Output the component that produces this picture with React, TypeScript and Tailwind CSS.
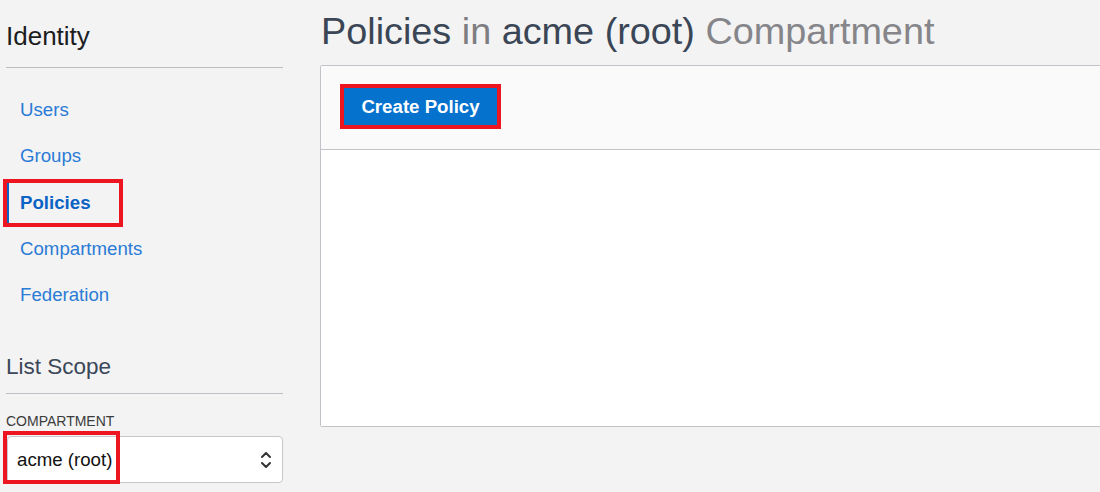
import React from 'react';

const navItems = ['Users', 'Groups', 'Policies', 'Compartments', 'Federation'];

function SelectArrows() {
  return (
    <svg width="12" height="22" viewBox="0 0 12 22" fill="none" aria-hidden="true">
      <polyline points="2,8 6,4 10,8" stroke="#333" strokeWidth="2" strokeLinecap="round" strokeLinejoin="round" />
      <polyline points="2,14 6,18 10,14" stroke="#333" strokeWidth="2" strokeLinecap="round" strokeLinejoin="round" />
    </svg>
  );
}

function Sidebar() {
  return (
    <aside className="w-[277px] ml-[6px] shrink-0">
      <div className="pt-[20px] pb-[15px] border-b border-[#bdbdc4]">
        <h2 className="text-[26px] leading-[32px] text-[#1d1d1f]">Identity</h2>
      </div>

      <nav className="mt-[19px] flex flex-col">
        {navItems.map((item) => {
          const active = item === 'Policies';
          return (
            <div key={item} className="relative h-[46.25px] flex items-center pl-[14px]">
              {active && (
                <>
                  <span className="absolute left-0 top-[3px] w-[3px] h-[40px] bg-[#0b63c5]" />
                  <span className="absolute left-[-3px] top-[-1px] w-[120px] h-[48px] border-[4px] border-[#ec1520]" />
                </>
              )}
              <a
                href="#"
                className={
                  active
                    ? 'text-[18.67px] leading-[22px] font-bold text-[#0b63c5]'
                    : 'text-[18.67px] leading-[22px] text-[#2a7bd6]'
                }
              >
                {item}
              </a>
            </div>
          );
        })}
      </nav>

      <div className="mt-[35px] pb-[12px] border-b border-[#bdbdc4]">
        <h2 className="text-[22.5px] leading-[28px] text-[#3b4758]">List Scope</h2>
      </div>

      <p className="mt-[19px] text-[14px] leading-[16px] text-[#3b3b3b] uppercase">Compartment</p>

      <div className="relative mt-[7px] ml-[1px] w-[276px] h-[47px] bg-white border border-[#c6c6cc] rounded-[4px] flex items-center justify-between pl-[9px] pr-[10px]">
        <span className="text-[18.67px] leading-[22px] text-[#111]">acme (root)</span>
        <SelectArrows />
        <span className="absolute left-[-5px] top-[-6px] w-[117px] h-[53px] border-[4px] border-[#ec1520]" />
      </div>
    </aside>
  );
}

export default function App() {
  return (
    <div
      className="w-[1100px] h-[492px] overflow-hidden bg-[#f3f3f3] flex"
      style={{ fontFamily: '"Liberation Sans", Arial, sans-serif' }}
    >
      <Sidebar />
      <main className="ml-[37px] flex-1 min-w-0">
        <h1 className="pt-[9px] text-[37.8px] leading-[44px] whitespace-nowrap ml-[1px]">
          <span className="text-[#3a4656]">Policies</span>{' '}
          <span className="text-[#7d7d82]">in</span>{' '}
          <span className="text-[#3a4656]">acme (root)</span>{' '}
          <span className="text-[#85858a]">Compartment</span>
        </h1>

        <section className="mt-[12px] w-[900px] border border-[#c2c2c8] rounded-tl-[2px] rounded-bl-[2px]">
          <div className="h-[84px] bg-[#fafafa] border-b border-[#c2c2c8] pl-[19px] pt-[18px]">
            <button
              type="button"
              className="w-[161px] h-[45px] bg-[#0572ce] border-[4px] border-[#ec1520] text-white font-bold text-[18.67px] leading-[22px]"
            >
              Create Policy
            </button>
          </div>
          <div className="h-[276px] bg-white" />
        </section>
      </main>
    </div>
  );
}
